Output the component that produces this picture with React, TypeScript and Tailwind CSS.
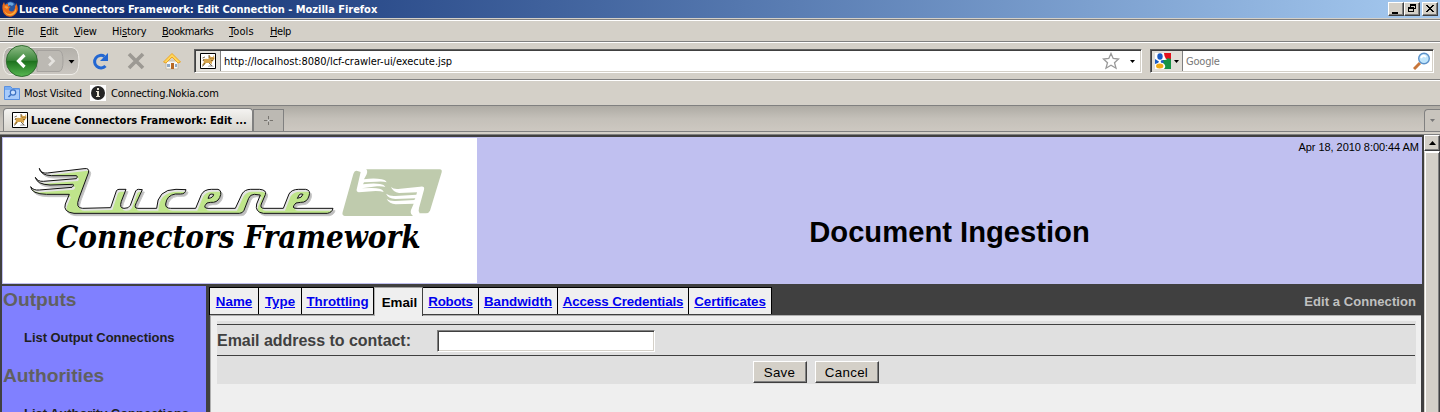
import React from "react";

const wordmark =
  "M118 115C121 126 128 130 142 129L252 116Q270 113 265 129L237 204Q225 235 248 235L332 233L349 183Q351 178 357 178L378 178L364 214Q357 235 372 235Q386 236 391 226L407 183Q410 178 415 178L427 179L409 218Q400 235 413 235L470 235Q472 178 528 178L558 179Q556 192 542 192L526 192Q500 196 497 222Q496 235 512 235L587 235L604 194Q612 178 634 178L654 178Q668 182 659 203Q651 219 632 217L621 219Q606 235 624 235L706 235L726 192Q734 178 752 178L779 178Q801 180 796 194L784 222Q779 235 792 235L850 235L867 192Q875 178 896 178L917 178Q933 180 927 198Q921 218 902 217L888 219Q872 235 888 235L999 235Q997 247 982 250L790 250Q764 246 770 222L781 195L763 193Q750 193 746 205L732 241Q728 250 718 250L222 250Q188 246 196 222L208 193L140 193Q94 192 92 170Q100 182 118 180L216 172Q224 164 218 163L150 165Q110 163 106 142Q112 155 130 154L229 146Q235 138 228 137L155 137Q122 136 118 115Z";
const counters =
  "M624 205L629 194Q632 191 641 193Q640 204 624 205ZM892 205L898 194Q902 190 909 193Q906 204 892 205Z";

function Logo() {
  return (
    <svg className="block h-[145px] w-[474px]" viewBox="9 24 1422 435">
      <defs>
        <clipPath id="word"><path d={wordmark} /></clipPath>
      </defs>
      <path d={wordmark} transform="translate(6 7)" fill="#bdbdbd" stroke="#c8c8c8" strokeWidth="3" />
      <path d={wordmark} fill="#e4e4e4" />
      <g clipPath="url(#word)">
        <path d={wordmark} transform="translate(5 7)" fill="#bfe58b" />
      </g>
      <path d={wordmark} fill="none" stroke="#111" strokeWidth="3" strokeLinejoin="round" />
      <path d={counters} fill="#ddd" stroke="#111" strokeWidth="3" />
      <path d="M1070 122L1082 126L1100 118L1319 118Q1327 118 1325 127L1290 242Q1286 250 1278 250L1256 250L1240 258L1034 258Q1025 256 1028 246L1060 132Q1063 122 1070 122Z" fill="#bfcbad" />
      <g fill="#fff">
        <path d="M1082 126Q1080 118 1088 117L1098 117Q1104 122 1100 133L1092 148Q1122 143 1145 148Q1157 150 1160 157Q1149 153 1130 155L1092 157L1089 163Q1122 158 1140 162Q1153 164 1156 171Q1148 168 1131 169L1085 175Q1127 172 1138 176Q1149 178 1151 186Q1143 183 1127 183L1076 187Q1067 185 1071 174Z" />
        <path d="M1173 171Q1181 179 1201 176L1260 170Q1275 167 1272 179L1257 234Q1254 243 1259 250L1252 260L1242 260Q1229 253 1233 240L1241 221L1187 223Q1168 222 1160 207Q1169 214 1187 213L1243 210L1246 205L1186 207Q1164 205 1158 191Q1171 200 1187 198L1249 194L1251 187L1197 189Q1179 186 1173 171Z" />
      </g>
      <text x="168" y="353" textLength="1094" lengthAdjust="spacingAndGlyphs" fontFamily="'DejaVu Serif Condensed','DejaVu Serif',serif" fontWeight="700" fontStyle="italic" fontSize="93">Connectors Framework</text>
    </svg>
  );
}

function CatIcon() {
  return (
    <svg className="block size-4 shrink-0" viewBox="0 0 16 16">
      <path d="M.5.5h15v15H.5z" fill="#fff" stroke="#000" />
      <path d="M8 13L11 11L14 14H8Z" fill="#c6c6c6" />
      <path d="M3 7Q5 5 8 6L9 5L9 2L11 4L13 4L14 2L14.500 6L12 9L12 11L9 10L6 10L4 12L2 12L4 9Z" fill="#d5a34b" />
      <path d="M2.500 5L5 4M3 8L4 6M5 10L3 13L2 13M9 10L12 13M9 2V5" stroke="#5d4a2c" fill="none" strokeWidth=".8" />
      <path d="M10.500 5.500h.8M12.700 5.500h.8M11 7.500h2" stroke="#76551e" strokeWidth=".8" />
    </svg>
  );
}

function Firefox() {
  return (
    <svg className="block size-4 shrink-0" viewBox="0 0 16 16">
      <circle cx="8.500" cy="7" r="6.500" fill="#28559f" />
      <path d="M6 2Q9 0 12 3L10 5L8 4L6 5Z" fill="#69a6df" />
      <path d="M.5 8Q0 4 2 1L3 4Q4 3 6 3L6 5L8.500 6L7 7.500Q6.500 10 9 10.500Q12 11 13 7L13 4L14 5L14 2Q17 7 15 11Q12 16 7.500 15.800Q1 15 .5 8Z" fill="#e86b1c" />
      <path d="M2 8Q3 13 8 13Q13 12 14 7Q15 13 9 14.500Q3 15 2 8Z" fill="#f9b13c" />
      <path d="M2 6L4 5L6.500 6L5 8Z" fill="#f4a241" />
    </svg>
  );
}

function WinButton({ children, className = "" }: { children: React.ReactNode; className?: string }) {
  return (
    <div className={`h-[14px] w-4 border border-t-white border-l-white border-r-[#404040] border-b-[#404040] bg-[#d4d0c8] shadow-[inset_-1px_-1px_0_#808080] ${className}`}>
      <svg className="block h-3 w-[14px]" viewBox="0 0 14 12" shapeRendering="crispEdges">{children}</svg>
    </div>
  );
}

const menus = [
  ["F", "ile", "w-8 tracking-[-0.15px]"],
  ["E", "dit", "w-[34px] tracking-[-0.3px]"],
  ["V", "iew", "w-[38px] tracking-[-0.2px]"],
  ["Hi", "story", "w-[50px] tracking-[-0.1px]"],
  ["B", "ookmarks", "w-[67px] tracking-[-0.45px]"],
  ["T", "ools", "w-[41px] tracking-[0.1px]"],
  ["H", "elp", "w-8 tracking-[-0.4px]"],
];

const tabs: [string, string][] = [
  ["Name", "w-[49px]"],
  ["Type", "w-[43px]"],
  ["Throttling", "w-[72px]"],
  ["Email", "w-[49px]"],
  ["Robots", "w-[56px] tracking-[-0.25px]"],
  ["Bandwidth", "w-[79px]"],
  ["Access Credentials", "w-[131px] tracking-[-0.13px]"],
  ["Certificates", "w-[83px] tracking-[-0.1px]"],
];

function Browser() {
  return (
    <header className="h-[135px] bg-[#d4d0c8] font-['DejaVu_Sans_Condensed','DejaVu_Sans',sans-serif] text-[11px] leading-[14px] text-black">
      <div className="flex h-[18px] items-center bg-linear-to-r from-[#0a246a] to-[#a6caf0] pr-0.5 pl-0.5">
        <Firefox />
        <div className="ml-px flex-1 pt-px text-[11px] font-bold tracking-[-0.03px] whitespace-nowrap text-white">Lucene Connectors Framework: Edit Connection - Mozilla Firefox</div>
        <WinButton><path d="M3 9h6v2H3z" /></WinButton>
        <WinButton><path d="M5 1h6v5H9v3H3V4h2zM6 3v1h3v1h1V3zM4 6v2h4V6z" fillRule="evenodd" /></WinButton>
        <WinButton className="ml-0.5"><path d="M3 2h2v1h1v1h2V3h1V2h2v1h-1v1H9v1H8v1h1v1h1v1h1v1H9V8H8V7H6v1H5v1H3V8h1V7h1V6h1V5H5V4H4V3H3z" /></WinButton>
      </div>
      <div className="mt-px h-px bg-[#808080]" />
      <div className="h-px bg-white" />
      <nav className="flex h-5 items-center pt-0.5 pl-2">
        {menus.map(([key, rest, width]) => (
          <div key={key + rest} className={`shrink-0 whitespace-nowrap ${width}`}>
            {key === "Hi" ? <>Hi<u className="underline-offset-1">s</u>tory</> : <><u className="underline-offset-1">{key}</u>{rest}</>}
          </div>
        ))}
      </nav>
      <div className="h-px bg-[#808080]" />
      <div className="h-px bg-white" />
      <div className="flex h-9 items-center pl-0.5">
        <svg className="block h-9 w-[78px] shrink-0" viewBox="2 43 78 36">
          <defs>
            <linearGradient id="green" x2="0" y2="1"><stop stopColor="#8fbc87" /><stop offset=".48" stopColor="#3c873b" /><stop offset=".5" stopColor="#1c701c" /><stop offset="1" stopColor="#57b751" /></linearGradient>
            <linearGradient id="pill" x2="0" y2="1"><stop stopColor="#b3b0aa" /><stop offset="1" stopColor="#cbc7c1" /></linearGradient>
          </defs>
          <path d="M9 47.500H72Q79 48 79 61Q79 74 72 74.500H9Q3 73 3 61Q3 49 9 47.500Z" fill="url(#pill)" stroke="#efede8" />
          <path d="M37 50.500H59Q63 51 63 61Q63 71 59 71.500H37Z" fill="#bcb9b3" stroke="#a5a29e" />
          <circle cx="21.800" cy="61" r="15.500" fill="url(#green)" stroke="#316d31" />
          <path d="M24.500 55L18.500 61L24.500 67" fill="none" stroke="#fff" strokeWidth="3.200" />
          <path d="M49 56.500L53.500 61L49 65.500" fill="none" stroke="#e5e3df" strokeWidth="2.600" />
          <path d="M68.500 60h6l-3 3.500z" />
        </svg>
        <svg className="ml-[11px] block h-[18px] w-[18px] shrink-0" viewBox="91 52 18 18">
          <path d="M105.500 66A6.300 6.300 0 1 1 104.500 56.500" fill="none" stroke="#2367d2" strokeWidth="3" />
          <path d="M108 53V61H100Z" fill="#2367d2" />
        </svg>
        <svg className="ml-[18px] block h-[18px] w-[18px] shrink-0" viewBox="127 52 18 18"><path d="M129 54L143 68M143 54L129 68" stroke="#9c9993" strokeWidth="3.600" /></svg>
        <svg className="ml-[18px] block h-[18px] w-[18px] shrink-0" viewBox="163 52 18 18">
          <path d="M166 61h12v8h-12z" fill="#f7f7f4" stroke="#c6bba9" />
          <path d="M163.500 62L172 53.500L180.500 62L178 63L172 57L166 63Z" fill="#ffd65a" stroke="#eca425" />
          <path d="M171 63h3v6h-3z" fill="#b76823" /><path d="M167 64h3v3h-3zM175 64h2v3h-2z" fill="#8fa8c6" />
        </svg>
        <div className="ml-[13px] flex h-6 w-[948px] shrink-0 items-center border border-t-[#606060] border-l-[#606060] border-r-white border-b-white bg-white shadow-[inset_1px_1px_0_#404040,inset_-1px_-1px_0_#d4d0c8]">
          <div className="ml-px flex h-5 w-[25px] items-center border-r border-[#808080] bg-[#e4e2dd] pl-1"><CatIcon /></div>
          <div className="ml-[3px] flex-1 pt-0.5 tracking-[-0.03px]">http://localhost:8080/lcf-crawler-ui/execute.jsp</div>
          <svg className="mr-[10px] block size-[18px]" viewBox="0 0 18 18"><path d="M9 1.500L11.200 6.500L16.500 7L12.500 10.700L14 16.200L9 13.300L4 16.200L5.500 10.700L1.500 7L6.800 6.500Z" fill="#fff" stroke="#999" strokeWidth="1.300" /></svg>
          <svg className="mr-[6px] block h-[3px] w-[5px]" viewBox="0 0 5 3"><path d="M0 0h5L2.500 3z" /></svg>
        </div>
        <div className="ml-2 flex h-6 w-[284px] shrink-0 items-center border border-t-[#606060] border-l-[#606060] border-r-white border-b-white bg-white shadow-[inset_1px_1px_0_#404040,inset_-1px_-1px_0_#d4d0c8]">
          <div className="ml-px flex h-5 w-[31px] items-center border-r border-[#808080] bg-[#e2dfd9] pl-[3px]">
            <svg className="block size-4" viewBox="0 0 16 16">
              <path d="M0 0h16v16H0z" fill="#fff" /><path d="M9 0h7v6H11Q9 3 9 0z" fill="#e3111d" /><path d="M8 7Q13 7 12 5L16 6v10H9q3-3-1-6z" fill="#159344" />
              <ellipse cx="5" cy="3.500" rx="2.700" ry="3.300" fill="#195bc4" /><path d="M0 6L4 8.500L3 10L0 11Z" fill="#195bc4" /><ellipse cx="4.700" cy="13" rx="3.700" ry="2.500" fill="#f1aa13" /><circle cx="7.300" cy="8.500" r="1.500" fill="#195bc4" />
            </svg>
            <svg className="ml-[3px] block h-[3px] w-[5px]" viewBox="0 0 5 3"><path d="M0 0h5L2.500 3z" /></svg>
          </div>
          <div className="ml-[3px] flex-1 pt-0.5 tracking-[-0.2px] text-[#777]">Google</div>
          <svg className="mr-0.5 block h-[18px] w-[18px]" viewBox="0 0 18 18"><path d="M1 17L7 11" stroke="#c8763a" strokeWidth="3" /><circle cx="11" cy="6.500" r="5.300" fill="#bfe5fc" stroke="#5c91c9" strokeWidth="1.400" /><path d="M8 6Q10 2 13 5" stroke="#fff" strokeWidth="2" fill="none" /></svg>
        </div>
      </div>
      <div className="h-px bg-[#808080]" />
      <div className="h-px bg-white" />
      <div className="flex h-6 items-center pl-1 tracking-[-0.2px]">
        <svg className="block size-4" viewBox="0 0 16 16"><path d="M.5 1.500h6l2 2h7v11H.5z" fill="#79adf2" stroke="#5b91df" /><path d="M1 5h14v9H1z" fill="#a8cbfa" /><circle cx="9" cy="7.500" r="2.700" fill="#c9e0ff" stroke="#3d72c4" strokeWidth="1.200" /><path d="M7 9.500L4.500 12" stroke="#3d72c4" strokeWidth="1.600" /></svg>
        <div className="ml-1 w-[66px] pt-0.5 whitespace-nowrap">Most Visited</div>
        <svg className="block size-4" viewBox="0 0 16 16"><path d="M0 0h16v16H0z" fill="#fff" /><circle cx="8" cy="8" r="7" fill="#252525" /><path d="M7 3h2v2H7zM6 6h3v5h1v1H6v-1h1V7H6z" fill="#e8e2d3" /></svg>
        <div className="ml-[5px] pt-0.5">Connecting.Nokia.com</div>
      </div>
      <div className="h-px bg-[#808080]" />
      <div className="flex h-[25px] items-end bg-linear-to-b from-[#aeaba4] via-[#c4c0b9] to-[#cdc8c1]">
        <div className="ml-[3px] flex h-[23px] w-[250px] items-center rounded-t-[4px] border border-b-0 border-[#808080] bg-linear-to-b from-[#f4f3f1] to-[#d7d4cd] pl-2">
          <CatIcon /><div className="ml-[3px] pt-0.5 font-bold whitespace-nowrap">Lucene Connectors Framework: Edit ...</div>
        </div>
        <div className="flex h-[22px] w-[31px] items-center justify-center border border-b-0 border-[#808080] bg-[#bcb9b3]"><svg className="block size-[9px]" viewBox="0 0 9 9"><path d="M4 0h1v4h4v1H5v4H4V5H0V4h4z" fill="#77746f" /><path d="M3.500 3.500h2v2h-2z" fill="#ddd" /></svg></div>
        <div className="ml-auto flex h-[22px] w-4 items-center justify-center rounded-tl-sm border border-r-0 border-b-0 border-[#808080] bg-[#c8c4bd]"><svg className="block h-[3px] w-[5px]" viewBox="0 0 5 3"><path d="M0 0h5L2.500 3z" fill="#777" /></svg></div>
      </div>
      <div className="h-px bg-[#808080]" />
      <div className="h-0.5 bg-[#d4d0c8]" />
      <div className="h-px bg-[#808080]" />
    </header>
  );
}

export default function App() {
  return (
    <div className="h-[412px] w-[1440px] overflow-hidden bg-[#404040] font-['Liberation_Sans',Arial,sans-serif]">
      <Browser />
      <div className="flex h-[277px]">
        <div className="w-[1424px] pt-0.5 pl-0.5">
          <div className="flex h-[147px] w-[1420px] bg-[#c0c0f0]">
            <div className="mt-px ml-px h-[145px] w-[474px] bg-white"><Logo /></div>
            <div className="flex flex-1 flex-col">
              <div className="mt-[3px] pr-[3px] text-right text-[11px] leading-[14px] tracking-[-0.05px]">Apr 18, 2010 8:00:44 AM</div>
              <h1 className="mt-[61px] text-center text-[29.2px] leading-[34px] font-bold">Document Ingestion</h1>
            </div>
          </div>
          <div className="mt-0.5 flex h-[126px] overflow-hidden">
            <aside className="w-[204px] shrink-0 overflow-hidden bg-[#8080ff] font-bold">
              <h2 className="mt-[3px] pl-px text-[19.2px] leading-[22px] text-[#606060]">Outputs</h2>
              <div className="mt-[19px] pl-[22px] text-[13px] leading-4 tracking-[-0.05px] text-[#202020]">List Output Connections</div>
              <h2 className="mt-[19px] pl-px text-[19.2px] leading-[22px] text-[#606060]">Authorities</h2>
              <div className="mt-[19px] pl-[22px] text-[13px] leading-4 tracking-[-0.05px] text-[#202020]">List Authority Connections</div>
            </aside>
            <main className="ml-[3px] w-[1212px]">
              <div className="flex h-[29px] items-start pt-px">
                <div className="flex h-7 border-l border-black">
                  {tabs.map(([name, width]) =>
                    name === "Email" ? (
                      <div key={name} className={`h-[29px] shrink-0 border-t border-r border-l border-t-[#a0a0a0] border-r-[#404040] border-l-[#b0b0b0] bg-[#efefef] pt-[7px] pl-0.5 text-center text-[13.33px] leading-4 font-bold text-black ${width}`}>{name}</div>
                    ) : (
                      <div key={name} className={`h-[27px] shrink-0 border-t border-r border-black bg-[#efefef] pt-[6px] text-center text-[13.33px] leading-4 font-bold whitespace-nowrap text-[#0000ee] underline ${width}`}>{name}</div>
                    )
                  )}
                </div>
                <div className="ml-auto pt-[7px] pr-[5px] text-[13px] leading-4 font-bold tracking-[0.07px] text-[#c0c0c0]">Edit a Connection</div>
              </div>
              <section className="ml-px h-[97px] border-t border-l border-[#b0b0b0] bg-[#efefef] pt-[5px] pr-[5px] pl-[6px]">
                <div className="h-[63px] bg-[#e0e0e0] pt-[3px]">
                  <div className="mr-px flex h-8 items-center border-t border-b border-[#404040]">
                    <label className="w-[220px] pt-px text-base leading-5 font-bold tracking-[-0.03px] text-[#404040]">Email address to contact:</label>
                    <div className="mt-0.5 h-[22px] w-[218px] border border-t-[#808080] border-l-[#808080] border-r-white border-b-white bg-white shadow-[inset_1px_1px_0_#404040,inset_-1px_-1px_0_#d4d0c8]" />
                  </div>
                  <div className="flex justify-center gap-2 pt-[5px] pr-0.5 text-[13.33px] leading-[22px] tracking-[0.3px]">
                    {["Save", "Cancel"].map((label) => (
                      <button key={label} className={`h-[22px] border border-t-white border-l-white border-r-[#404040] border-b-[#404040] bg-[#d4d0c8] pt-px text-center leading-5 shadow-[inset_-1px_-1px_0_#808080] ${label === "Save" ? "w-[54px]" : "w-16"}`}>{label}</button>
                    ))}
                  </div>
                </div>
              </section>
            </main>
          </div>
        </div>
        <div className="w-4 bg-[#d4d0c8]">
          <div className="flex h-4 items-center justify-center border border-t-white border-l-white border-r-[#404040] border-b-[#404040] shadow-[inset_-1px_-1px_0_#808080]"><svg className="block h-1 w-[7px]" viewBox="0 0 7 4"><path d="M0 4L3.500 0L7 4z" /></svg></div>
          <div className="h-[261px] border-t border-r border-l border-t-white border-r-[#404040] border-l-[#d4d0c8] shadow-[inset_1px_1px_0_#fff,inset_-1px_0_0_#808080]" />
        </div>
      </div>
    </div>
  );
}
